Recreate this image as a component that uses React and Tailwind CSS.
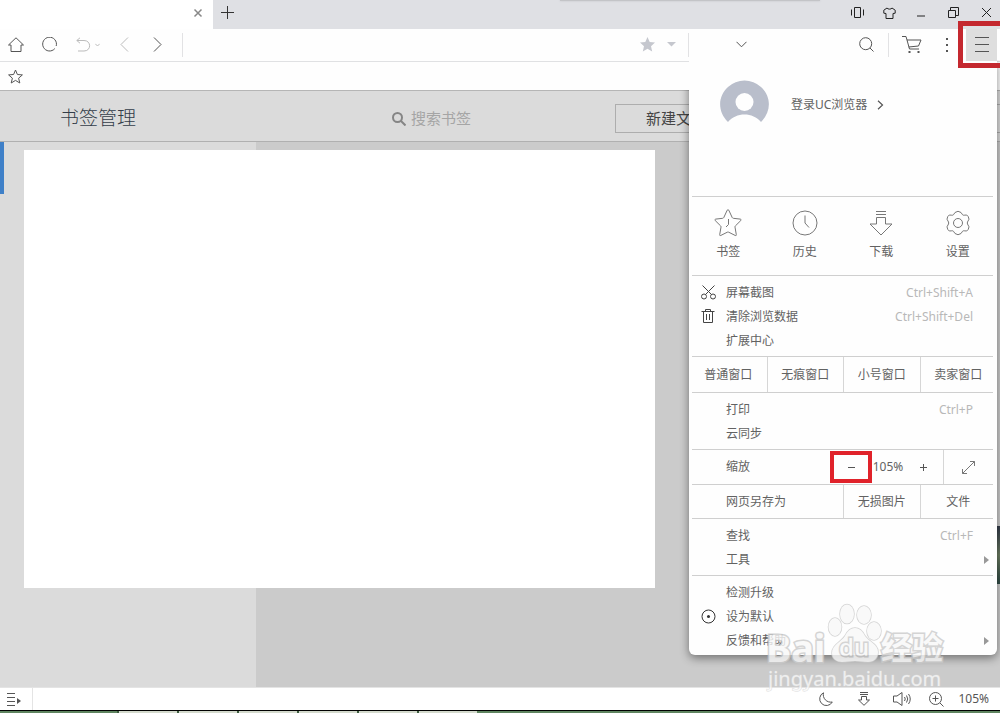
const ICON_BTN = 'flex h-8 shrink-0 items-center justify-center'
const SECTION = 'border-t border-[#cfcfcf]'
const COLUMNS = '-mr-[3px] -ml-0.5 grid grid-cols-4'
const CELL = 'flex items-center justify-center border-l border-[#d6d6d6] first:border-l-0'

const Svg = ({ w = 16, h = 16, className = 'text-[#555]', width = 1, children }) => (
  <svg
    width={w}
    height={h}
    viewBox={`0 0 ${w} ${h}`}
    fill="none"
    stroke="currentColor"
    strokeWidth={width}
    className={`shrink-0 ${className}`}
    aria-hidden="true"
  >
    {children}
  </svg>
)

const Divider = ({ className = '' }) => <span className={`h-6 w-px shrink-0 bg-[#e2e2e4] ${className}`} />

function TitleBar() {
  return (
    <header className="relative flex h-[29px] bg-[#dfe0e4]">
      <div className="flex w-[213px] items-center justify-end bg-white pr-[9px]">
        <button type="button" aria-label="关闭标签页" className="mb-1 p-px">
          <Svg w={10} h={10} width={1.5} className="text-[#888]"><path d="M1.5 1.5l7 7M8.5 1.5l-7 7" /></Svg>
        </button>
      </div>
      <button type="button" aria-label="新标签页" className="mb-1 flex w-[29px] items-center justify-center">
        <Svg w={13} h={13} className="text-[#333]"><path d="M6.5 0v13M0 6.5h13" /></Svg>
      </button>
      <span className="absolute top-0 left-[56%] h-px w-[26%] bg-[#c3c4c7] shadow-[0_0_2px_#b9babd]" />
      <div className="mb-1 ml-auto flex text-[#222]">
        <button type="button" aria-label="分屏" className="flex w-8 items-center justify-center">
          <Svg w={13} h={11} className="text-[#222]"><path d="M.5 2.500v6M12.500 2.500v6M3.500 .5h6v10h-6z" /></Svg>
        </button>
        <button type="button" aria-label="皮肤" className="flex w-8 items-center justify-center">
          <Svg w={13} h={12} className="text-[#222]"><path d="M4 1L.8 3.200v3L3 6.500v5h7v-5l2.200-.3v-3L9 1C8.300 2.500 4.700 2.500 4 1z" /></Svg>
        </button>
        <button type="button" aria-label="最小化" className="flex w-8 items-center justify-center pt-[6px]">
          <Svg w={8} h={2} className="text-[#222]"><path d="M0 1h8" /></Svg>
        </button>
        <button type="button" aria-label="还原" className="flex w-[33px] items-center justify-center">
          <Svg w={11} h={11} className="text-[#222]"><path d="M.5 3.500h7v7h-7zM2.500 3.500v-3h8v8h-3" /></Svg>
        </button>
        <button type="button" aria-label="关闭" className="flex w-[30px] items-center justify-center pl-0.5">
          <Svg w={11} h={11} className="text-[#222]"><path d="M1 1l9 9M10 1l-9 9" /></Svg>
        </button>
      </div>
    </header>
  )
}

function Toolbar() {
  return (
    <div className="flex h-[33px] items-center border-b border-[#e0e1e3] bg-[#fefefe] pb-px">
      <button type="button" aria-label="主页" className={`${ICON_BTN} w-8`}>
        <Svg w={16} h={15}><path d="M.5 8L8 .8 15.500 8H13v6.500H3V8z" /></Svg>
      </button>
      <button type="button" aria-label="刷新" className={`${ICON_BTN} w-[34px]`}>
        <Svg w={15} h={15}><path d="M12.800 11.600A6.900 6.900 0 1 1 14.200 9" /></Svg>
      </button>
      <button type="button" aria-label="撤销" className={`${ICON_BTN} w-11 gap-1`}>
        <Svg w={15} h={15} className="text-[#bbb]"><path d="M4 .8L.8 3.500 4 6.200M.8 3.500H8c7.500 0 7.500 10.500 0 10.500H2" /></Svg>
        <Svg w={5} h={4} className="text-[#bbb]"><path d="M.3.8l2.200 2.200L4.700.8" /></Svg>
      </button>
      <button type="button" aria-label="后退" className={`${ICON_BTN} w-7`}>
        <Svg w={9} h={15} className="text-[#bbb]"><path d="M8 .5l-7 7 7 7" /></Svg>
      </button>
      <button type="button" aria-label="前进" className={`${ICON_BTN} w-[38px]`}>
        <Svg w={9} h={15}><path d="M1 .5l7 7-7 7" /></Svg>
      </button>
      <Divider className="ml-1.5" />
      <input type="text" aria-label="地址栏" className="h-6 min-w-0 flex-1 bg-transparent outline-none" />
      <button type="button" aria-label="收藏" className={`${ICON_BTN} w-7`}>
        <svg width="15" height="15" viewBox="0 0 15 15" fill="#c5c7ce">
          <path d="M7.500 0l2.200 5.100 5.300.5-4 3.600 1.200 5.300-4.700-2.800-4.700 2.800L4 9.200 0 5.600l5.300-.5z" />
        </svg>
      </button>
      <button type="button" aria-label="更多地址" className={`${ICON_BTN} w-5`}>
        <svg width="9" height="5" viewBox="0 0 9 5" fill="#c5c7ce"><path d="M0 0h9L4.500 4.500z" /></svg>
      </button>
      <Divider className="ml-[7px]" />
      <button type="button" aria-label="搜索引擎" className={`${ICON_BTN} ml-[38px] w-7`}>
        <Svg w={11} h={7}><path d="M.5.8l5 5 5-5" /></Svg>
      </button>
      <input type="text" aria-label="搜索" className="h-6 w-[97px] bg-transparent outline-none" />
      <button type="button" aria-label="搜索网页" className={`${ICON_BTN} w-7`}>
        <Svg w={15} h={15}><circle cx="6.700" cy="6.700" r="6" /><path d="M11 11l3.500 3.500" /></Svg>
      </button>
      <Divider className="ml-2" />
      <button type="button" aria-label="购物" className={`${ICON_BTN} ml-[7px] w-8`}>
        <Svg w={20} h={17}>
          <path d="M0 .5h4L7.500 13H17M5 4h14l-2.500 6L6.700 11" />
          <path d="M6.500 15h2v2h-2zM15.500 15h2v2h-2z" fill="currentColor" stroke="none" />
        </Svg>
      </button>
      <button type="button" aria-label="更多" className={`${ICON_BTN} w-[38px]`}>
        <svg width="3" height="14" viewBox="0 0 3 14" fill="#555"><path d="M0 0h2v2H0zM0 6h2v2H0zM0 12h2v2H0z" /></svg>
      </button>
      <button type="button" aria-label="菜单" className={`${ICON_BTN} relative z-10 mr-[3px] w-[31px] bg-[#dedede]`}>
        <Svg w={14} h={15}><path d="M0 .5h14M0 7.500h14M0 14.500h14" /></Svg>
        <span className="absolute -top-2 -left-2 h-[47px] w-12 border-5 border-[#c4282f]" />
      </button>
    </div>
  )
}

const QUICK = [
  {
    label: '书签',
    icon: (
      <Svg w={28} h={28} className="text-[#777]">
        <path
          strokeLinejoin="round"
          d="M13.200 1.200q.8-1.200 1.600 0l3.400 7.300q.4.7 1.100.8l7 .8q1.300.3.500 1.400l-5.400 5.400q-.5.500-.4 1.200l1.300 7.600q.1 1.300-1 .8l-6.600-3.300q-.7-.3-1.400 0l-6.600 3.300q-1.100.5-1-.8L7 18.100q.1-.7-.4-1.200L1.200 11.500q-.8-1.100.5-1.400l7-.8q.7-.1 1.100-.8z"
        />
        <path d="M14.500 10v5.500L12 18" />
      </Svg>
    ),
  },
  {
    label: '历史',
    icon: (
      <Svg w={26} h={26} className="text-[#777]">
        <circle cx="13" cy="13" r="12" /><path d="M13 5.500V13l4 4.500" />
      </Svg>
    ),
  },
  {
    label: '下载',
    icon: (
      <Svg w={24} h={26} className="text-[#777]">
        <path d="M7 1.500h10M7 4.500h10M7.500 14V7.500h9V14H23L12 25 1 14z" />
      </Svg>
    ),
  },
  {
    label: '设置',
    icon: (
      <Svg w={26} h={26} className="text-[#777]">
        <path
          strokeLinejoin="round"
          d="M10 2.500q3-2.500 6 0l1.500 2.200q.7.700 1.700.5l2.500-.2q2 1.200 2.300 4.200l-1.500 2.800q-.4 1 0 2l1.500 2.800q-.3 3-2.300 4.200l-2.500-.2q-1-.2-1.700.5L16 23.500q-3 2.500-6 0l-1.500-2.200q-.7-.7-1.700-.5l-2.500.2q-2-1.200-2.300-4.200L3.500 14q.4-1 0-2L2 9.200Q2.300 6.200 4.300 5l2.500.2q1 .2 1.700-.5z"
        />
        <circle cx="13" cy="13" r="4.500" />
      </Svg>
    ),
  },
]

const WINDOWS = ['普通窗口', '无痕窗口', '小号窗口', '卖家窗口']

const scissors = (
  <Svg w={15} h={15} className="text-[#444]">
    <circle cx="3" cy="11.500" r="2.500" /><circle cx="12" cy="11.500" r="2.500" />
    <path d="M1.500.5l9 9M13.500.5l-9 9" />
  </Svg>
)
const trash = (
  <Svg w={14} h={14} className="text-[#444]">
    <path d="M.5 2.500h13M4.500 2V.5h5V2M2.500 3v10.500h9V3M5.500 5v6M8.500 5v6" />
  </Svg>
)
const target = (
  <Svg w={15} h={15} className="text-[#333]">
    <circle cx="7.500" cy="7.500" r="6.500" /><circle cx="7.500" cy="7.500" r="1.500" fill="currentColor" stroke="none" />
  </Svg>
)

function MenuRow({ icon, label, shortcut, sub }) {
  return (
    <button type="button" className="flex h-6 w-full items-center text-left">
      <span className="flex w-8 justify-center pb-0.5">{icon}</span>
      <span className="ml-0.5">{label}</span>
      {shortcut && <span className="mr-5 ml-auto text-[#b8b8b8]">{shortcut}</span>}
      {sub && (
        <svg className="mr-[3px] ml-auto" width="6" height="8" viewBox="0 0 6 8" fill="#999"><path d="M0 0l5 4-5 4z" /></svg>
      )}
    </button>
  )
}

function Menu() {
  return (
    <div className="absolute top-[60px] right-[3px] w-[308px] rounded-b-md bg-[#fefefe] pr-1 pb-0.5 pl-[3px] text-xs text-[#626262] shadow-[0_3px_10px_rgba(0,0,0,0.45)] [clip-path:polygon(0_0,101%_0,101%_104%,-6%_104%,-6%_30px,0_30px)]">
      <div className="flex h-[136px] items-start pt-5 pl-7">
        <svg width="49" height="43" viewBox="0 0 49 43" aria-hidden="true">
          <path fill="#b9becb" d="M8 42C-3 31-2 16 8 7a24.500 24.500 0 0 1 33 0c10 9 11 24 0 35-8-10-25-10-33 0z" />
          <circle cx="24.500" cy="22" r="9" fill="#fefefe" />
        </svg>
        <button type="button" className="mt-4 ml-[22px] flex items-center gap-2.5 leading-[18px]">
          登录UC浏览器
          <Svg w={7} h={10} width={1.2}><path d="M1 .8L5.500 5 1 9.200" /></Svg>
        </button>
      </div>

      <div className={SECTION}>
        <div className={`${COLUMNS} h-[78px]`}>
          {QUICK.map(({ label, icon }) => (
            <button key={label} type="button" className="flex flex-col items-center pt-[11px]">
              <span className="flex h-[30px] items-center">{icon}</span>
              <span className="mt-[5px] leading-[18px]">{label}</span>
            </button>
          ))}
        </div>
      </div>

      <div className={`${SECTION} pt-[5px] pb-[3px]`}>
        <MenuRow icon={scissors} label="屏幕截图" shortcut="Ctrl+Shift+A" />
        <MenuRow icon={trash} label="清除浏览数据" shortcut="Ctrl+Shift+Del" />
        <MenuRow label="扩展中心" />
      </div>

      <div className={SECTION}>
        <div className={`${COLUMNS} h-[35px]`}>
          {WINDOWS.map((name) => (
            <button key={name} type="button" className={CELL}>{name}</button>
          ))}
        </div>
      </div>

      <div className={`${SECTION} pt-[5px] pb-[3px]`}>
        <MenuRow label="打印" shortcut="Ctrl+P" />
        <MenuRow label="云同步" />
      </div>

      <div className={`${SECTION} flex h-[35px] items-center`}>
        <span className="ml-[34px]">缩放</span>
        <button type="button" aria-label="缩小" className="ml-auto flex h-8 w-[42px] items-center justify-center border-4 border-[#e0222a]">
          <Svg w={7} h={1}><path d="M0 .5h7" /></Svg>
        </button>
        <span className="w-8 text-center">105%</span>
        <button type="button" aria-label="放大" className="flex h-8 w-[39px] items-center justify-center">
          <Svg w={7} h={7}><path d="M0 3.500h7M3.500 0v7" /></Svg>
        </button>
        <button type="button" aria-label="全屏" className="flex h-full w-[50px] items-center justify-center border-l border-[#d6d6d6]">
          <Svg w={13} h={13} className="text-[#777]"><path d="M.5 8v4.500H5M8 .5h4.500V5M.5 12.500l12-12" /></Svg>
        </button>
      </div>

      <div className={SECTION}>
        <div className={`${COLUMNS} h-[33px]`}>
          <span className="col-span-2 flex items-center pl-9">网页另存为</span>
          <button type="button" className={CELL}>无损图片</button>
          <button type="button" className={CELL}>文件</button>
        </div>
      </div>

      <div className={`${SECTION} pt-[5px] pb-[3px]`}>
        <MenuRow label="查找" shortcut="Ctrl+F" />
        <MenuRow label="工具" sub />
      </div>

      <div className={`${SECTION} pt-[5px]`}>
        <MenuRow label="检测升级" />
        <MenuRow icon={target} label="设为默认" />
        <MenuRow label="反馈和帮助" sub />
      </div>
    </div>
  )
}

function Watermark() {
  return (
    <div className="pointer-events-none absolute right-[54px] bottom-[22px] w-[180px] text-[#f8f8f8] opacity-80 [paint-order:stroke_fill]">
      <div className="mb-0.5 flex items-end leading-9 font-bold [-webkit-text-stroke:3px_#cacaca]">
        <span className="w-[61px] text-[38px]">Bai</span>
        <span className="relative flex w-[54px] justify-center text-[24px]">
          <svg className="absolute bottom-0.5 left-0" width="56" height="60" viewBox="0 0 56 60" fill="#f8f8f8" stroke="#cacaca" strokeWidth="1.500">
            <ellipse cx="8" cy="24" rx="6.500" ry="9" />
            <ellipse cx="20" cy="11" rx="7" ry="9.500" />
            <ellipse cx="37" cy="12" rx="7" ry="9" />
            <ellipse cx="47" cy="28" rx="7" ry="9" />
            <path d="M28 25c-5 0-8 4-10 8-4 6-13 9-13 17 0 6 5 9 10 9 5 0 8-1 13-1s8 1 13 1c6 0 10-4 10-10 0-8-9-10-13-16-2-4-5-8-10-8z" />
          </svg>
          <span className="relative font-medium">du</span>
        </span>
        <span className="text-[31px]">经验</span>
      </div>
      <div className="pl-0.5 text-[20px] leading-6 [-webkit-text-stroke:1px_#d6d6d6]">jingyan.baidu.com</div>
    </div>
  )
}

function StatusBar() {
  return (
    <footer className="flex h-[23px] items-center border-t border-[#e4e4e4] bg-white text-xs text-[#555]">
      <button type="button" aria-label="侧边栏" className="flex h-full w-8 items-center justify-center pr-1">
        <Svg w={14} h={13}>
          <path d="M0 .5h8M0 4.500h8M0 8.500h8M0 12.500h8" />
          <path d="M10 5l4 3-4 3z" fill="currentColor" stroke="none" />
        </Svg>
      </button>
      <span className="h-full w-px bg-[#e4e4e4]" />
      <div className="ml-auto flex items-center pr-[11px]">
        <button type="button" aria-label="夜间模式" className="flex w-[38px] justify-center">
          <Svg w={14} h={14}><path d="M4.500.8A6.700 6.700 0 1 0 13.300 10 7.500 7.500 0 0 1 4.500.8z" /></Svg>
        </button>
        <button type="button" aria-label="下载" className="flex w-[38px] justify-center">
          <Svg w={12} h={14}><path d="M2 .5h8M2 2.500h8M3.500 8V4.500h5V8h3L6 13.300.5 8z" /></Svg>
        </button>
        <button type="button" aria-label="声音" className="flex w-[38px] justify-center">
          <Svg w={18} h={14}><path d="M.5 4v6H4l5 3.500V.5L4 4zM11.500 5q1.500 2 0 4M13.500 3.500q2.500 3.500 0 7M15.500 2q3.500 5 0 10" /></Svg>
        </button>
        <button type="button" className="flex items-center gap-3.5 pl-2">
          <Svg w={15} h={15}><circle cx="6.500" cy="6.500" r="6" /><path d="M11 11l3.500 3.500M3.500 6.500h6M6.500 3.500v6" /></Svg>
          105%
        </button>
      </div>
    </footer>
  )
}

export default function App() {
  return (
    <div className="relative flex min-h-screen flex-col overflow-hidden bg-white font-['Noto_Sans','Noto_Sans_CJK_SC',sans-serif]">
      <TitleBar />
      <Toolbar />
      <div className="flex h-[29px] items-center border-b border-[#b5b5b5] bg-[#fefefe] pl-2">
        <button type="button" aria-label="书签栏">
          <Svg w={15} h={15}><path d="M7.500 1l1.900 4.500 5 .4-3.800 3.300 1.200 4.800-4.300-2.600L3.200 14l1.200-4.800L.6 5.900l5-.4z" /></Svg>
        </button>
      </div>

      <div className="flex h-[51px] items-center border-b border-[#b0b0b0] bg-[#dbdbdb] pt-[5px]">
        <h1 className="ml-[60px] w-[332px] shrink-0 pb-px text-[19px] font-light text-[#333d49]">书签管理</h1>
        <label className="flex min-w-0 flex-1 items-center gap-[5px]">
          <Svg w={14} h={14} width={2} className="text-[#858585]"><circle cx="5.500" cy="5.500" r="4.500" /><path d="M9 9l4.500 4.500" /></Svg>
          <input type="text" placeholder="搜索书签" className="min-w-0 flex-1 bg-transparent text-[15px] outline-none placeholder:text-[#a5a5a5]" />
        </label>
        <button type="button" className="h-[29px] w-[385px] shrink-0 border border-r-0 border-[#adadad] pl-[30px] text-left text-[15px] text-[#444]">新建文</button>
      </div>

      <div className="relative flex flex-1 bg-[#cbcbcb]">
        <aside className="w-64 bg-[#dbdbdb]">
          <div className="h-[52px] w-1 bg-[#3f80c8]" />
        </aside>
        <div className="absolute top-2 right-[345px] bottom-[99px] left-6 bg-white" />
        <div className="absolute right-0 bottom-[103px] h-[58px] w-[3px] bg-linear-to-b from-[#333b49] via-[#6d7d62] to-[#2f4a45]" />
      </div>

      <StatusBar />
      <div className="flex h-[3px] border-t border-black bg-[#5f8560]">
        <span className="w-[117px]" />
        {[0, 1, 2, 3, 4, 5].map((i) => (
          <span key={i} className="w-[60px] border-l-2 border-[#3c5a3e] bg-[#d4dacd]" />
        ))}
      </div>

      <Menu />
      <Watermark />
    </div>
  )
}
